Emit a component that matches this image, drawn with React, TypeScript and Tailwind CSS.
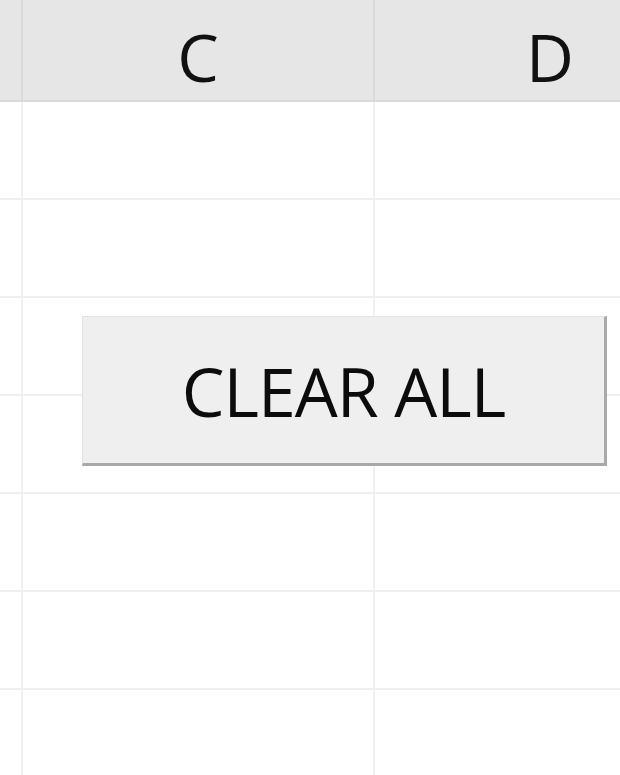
const columns = ["", "C", "D"];
const rows = [0, 1, 2, 3, 4, 5, 6];

export default function App() {
  return (
    <div
      className="relative w-[620px] h-[775px] overflow-hidden bg-white"
      style={{ fontFamily: '"Open Sans", "Noto Sans", sans-serif' }}
    >
      {/* Column headers */}
      <div className="grid grid-cols-[23px_352px_352px] h-[102px] bg-[#e6e6e6] border-b-2 border-[#d9d9d9]">
        {columns.map((c, i) => (
          <div
            key={i}
            className="flex items-center justify-center border-r-2 border-[#dadada] text-[66px] leading-none text-[#111] pt-[12px]"
          >
            {c}
          </div>
        ))}
      </div>

      {/* Cells */}
      {rows.map((r) => (
        <div
          key={r}
          className="grid grid-cols-[23px_352px_352px] h-[98px] border-b-2 border-[#efefef]"
        >
          {columns.map((_, i) => (
            <div key={i} className="border-r-2 border-[#f0f0f0]" />
          ))}
        </div>
      ))}

      {/* Floating form button */}
      <button className="absolute left-[82px] top-[316px] w-[525px] h-[150px] flex items-center justify-center bg-[#efefef] border-t border-l border-[#e2e2e2] border-r-[3px] border-b-[3px] border-r-[#a9a9a9] border-b-[#a9a9a9] text-[68px] leading-none text-[#0c0c0c] tracking-[-1px] pt-[2px]">
        CLEAR ALL
      </button>
    </div>
  );
}
